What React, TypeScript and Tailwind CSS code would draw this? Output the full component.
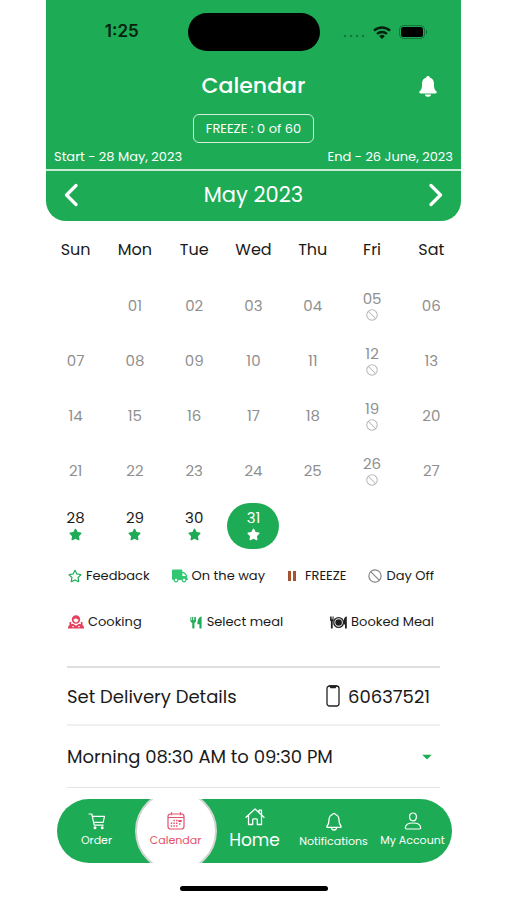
import type { ReactNode } from "react";
import { FaStar, FaTruck, FaRegStar } from "react-icons/fa";

const weekdays = ["Sun", "Mon", "Tue", "Wed", "Thu", "Fri", "Sat"];
const weeks = [
  ["", "01", "02", "03", "04", "05", "06"],
  ["07", "08", "09", "10", "11", "12", "13"],
  ["14", "15", "16", "17", "18", "19", "20"],
  ["21", "22", "23", "24", "25", "26", "27"],
  ["28", "29", "30", "31", "", "", ""],
];

function DayOffIcon({ className }: { className: string }) {
  return (
    <svg viewBox="0 0 16 16" fill="none" stroke="currentColor" strokeWidth="1.4" className={className} aria-hidden="true">
      <circle cx="8" cy="8" r="7" />
      <path d="M3 3l10 10" />
    </svg>
  );
}

function ChevronIcon({ direction }: { direction: "left" | "right" }) {
  return (
    <svg viewBox="0 0 14 24" className="h-6 w-[14px]" fill="none" stroke="currentColor" strokeWidth="3.2" strokeLinecap="round" strokeLinejoin="round" aria-hidden="true">
      <path d={direction === "left" ? "M12 2.500L2.500 12l9.500 9.500" : "M2 2.500l9.500 9.500L2 21.500"} />
    </svg>
  );
}

function SolidBellIcon() {
  return (
    <svg viewBox="0 0 18 21" className="h-[21px] w-[18px]" fill="currentColor" aria-hidden="true">
      <path d="M9 0c1 0 1.700.7 1.800 1.600C13.700 2.400 15 4.800 15 8c0 4.300.5 5.600 2.300 7.300.9.900.5 2.200-.8 2.200h-15c-1.300 0-1.700-1.300-.8-2.200C2.500 13.600 3 12.300 3 8c0-3.200 1.300-5.600 4.200-6.400C7.300.7 8 0 9 0zM5.800 18.500h6.400C11.800 20 10.500 20.800 9 20.800S6.200 20 5.800 18.500z" />
    </svg>
  );
}

function CookIcon() {
  return (
    <svg viewBox="0 0 16 14" className="h-[14px] w-4 text-[#e5405e]" fill="currentColor" aria-hidden="true">
      <path fillRule="evenodd" d="M8 .3a4.200 4.200 0 0 1 4.200 4.200c0 2.400-1.900 4.300-4.200 4.300S3.800 6.900 3.800 4.500A4.200 4.200 0 0 1 8 .3zM5.500 4.500C5.600 6.200 6.700 7.400 8 7.400s2.400-1.200 2.500-2.900C9.200 4.400 8.200 3.900 7.500 3.200c-.4.700-1.100 1.100-2 1.300z" />
      <path fillRule="evenodd" d="M1.500 7h1.700v2.300L5 8.800l3 2 3-2 1.800.5V7h1.700v3l1.500 2v1.500H0V12l1.500-2zM4.300 11v1.300h1.500V11zm5.900 0v1.300h1.500V11z" />
    </svg>
  );
}

function ForkKnifeIcon() {
  return (
    <svg viewBox="0 0 14 14" className="h-[13px] w-[14px] text-[#1dab55]" fill="currentColor" aria-hidden="true">
      <path d="M1 1h1v3.500h.8V1h1v3.500h.8V1h1v3.500h.4V1H7v4c0 1.300-.7 2-1.700 2.300v5.500c0 .9-2.300.9-2.300 0V7.300C1.700 7 1 6.300 1 5zM13 .5v12.300c0 .9-2.300.9-2.300 0V9H8.500c0-4.500 1.500-8.500 4.500-8.500z" />
    </svg>
  );
}

function BookedIcon() {
  return (
    <svg viewBox="0 0 17 13" className="h-[13px] w-[17px] text-[#202020]" fill="currentColor" aria-hidden="true">
      <path d="M0 .5h.9v2.800h.5V.5h.8v2.800h.5V.5h.9v3.800L2.700 5.500v7H.9v-7L0 4.300zM16.800.5v12H15V8.500h-1.200V4.500c0-2.200 1.200-4 3-4z" />
      <path fillRule="evenodd" d="M8.600 1a5.500 5.500 0 1 1 0 11 5.500 5.500 0 0 1 0-11zm0 1.300a4.200 4.200 0 1 0 0 8.400 4.200 4.200 0 0 0 0-8.400z" />
      <circle cx="8.600" cy="6.500" r="3.300" />
    </svg>
  );
}

function FreezeIcon() {
  return (
    <svg viewBox="0 0 14 12" className="h-3 w-[14px]" fill="#a8532f" aria-hidden="true">
      <path d="M1 1h3v10H1zM6 1h3v10H6z" />
    </svg>
  );
}

function CartIcon() {
  return (
    <svg viewBox="0 0 18 18" className="size-[18px]" fill="none" stroke="currentColor" strokeWidth="1.200" strokeLinecap="round" strokeLinejoin="round" aria-hidden="true">
      <path d="M1 2h2.800l2.400 11.200h9M4.300 4.300h12.200l-1.300 6H5.600" />
      <circle cx="7" cy="15.700" r=".9" fill="currentColor" />
      <circle cx="14.200" cy="15.700" r=".9" fill="currentColor" />
    </svg>
  );
}

function CalendarIcon() {
  return (
    <svg viewBox="0 0 18 18" className="size-[18px]" fill="none" stroke="currentColor" strokeWidth="1.200" aria-hidden="true">
      <rect x="1" y="2" width="16" height="15" rx="2.500" />
      <path d="M1 5.500h16M4.500 .3v3M13.500 .3v3" />
      <path strokeWidth="1.400" strokeDasharray="1.400 1.200" d="M6.400 8.500h4M3.800 11.300h6.600M3.800 14h6.600" />
      <path strokeWidth="2.200" d="M11.300 9h3.400" />
      <path strokeWidth="1.400" d="M12 12h1.400" />
    </svg>
  );
}

function HouseIcon() {
  return (
    <svg viewBox="0 0 20 18" className="h-[18px] w-5" fill="none" stroke="currentColor" strokeWidth="1.300" strokeLinecap="round" strokeLinejoin="round" aria-hidden="true">
      <path d="M1 9.300L10 1l9 8.300M14 4.500V2.200h2.500v4.600M3.500 7.300v9.200h4.200v-4.700c0-.6.4-1 1-1h2.600c.6 0 1 .4 1 1v4.700h4.200V7.300" />
    </svg>
  );
}

function BellIcon() {
  return (
    <svg viewBox="0 0 18 19" className="h-[19px] w-[18px]" fill="none" stroke="currentColor" strokeWidth="1.300" strokeLinejoin="round" aria-hidden="true">
      <path d="M9 1.300c.8 0 1.300.5 1.400 1.200C13 3.300 14 5.300 14 8c0 3.500.5 4.500 1.900 6 .5.6.2 1.400-.7 1.400H2.800c-.9 0-1.200-.8-.7-1.400C3.500 12.500 4 11.500 4 8c0-2.700 1-4.700 3.600-5.500.1-.7.600-1.200 1.400-1.200zM6.500 15.500c0 1.500 1.100 2.500 2.500 2.500s2.500-1 2.500-2.500" />
    </svg>
  );
}

function PersonIcon() {
  return (
    <svg viewBox="0 0 18 18" className="size-[18px]" fill="none" stroke="currentColor" strokeWidth="1.200" aria-hidden="true">
      <path d="M9 1c2 0 3.500 1.500 3.400 3.600C12.300 7 10.800 8.900 9 8.900S5.700 7 5.600 4.600C5.500 2.500 7 1 9 1z" />
      <path d="M1.300 15.800C1.500 12.800 4.500 11 9 11s7.500 1.800 7.700 4.800c0 .8-.4 1.200-1.200 1.200h-13c-.8 0-1.200-.4-1.200-1.200z" />
    </svg>
  );
}

function PhoneIcon() {
  return (
    <svg viewBox="0 0 14 22" className="h-[22px] w-[14px]" fill="none" stroke="#222" strokeWidth="1.300" aria-hidden="true">
      <rect x="1" y="1" width="12" height="20" rx="2.500" />
      <path d="M4 1h6l-.8 1.500H4.800z" fill="#222" />
    </svg>
  );
}

function StatusBar() {
  return (
    <div className="grid grid-cols-[1fr_132px_1fr] items-center pt-[13px] text-[#06210f]">
      <span className="pl-[10px] text-center font-['Inter',sans-serif] text-[17px] font-semibold">1:25</span>
      <div className="h-[38px] rounded-full bg-black" />
      <div className="flex items-center justify-end gap-2 pr-[34px]">
        <svg viewBox="0 0 22 4" className="mt-2 h-1 w-[22px] opacity-35" fill="currentColor" aria-hidden="true">
          <circle cx="2" cy="2" r="1.300" /><circle cx="8" cy="2" r="1.300" /><circle cx="14" cy="2" r="1.300" /><circle cx="20" cy="2" r="1.300" />
        </svg>
        <svg viewBox="0 0 18 13" className="h-[13px] w-[18px]" fill="none" stroke="currentColor" strokeWidth="2.400" aria-hidden="true">
          <path d="M1 4.700a11.500 11.500 0 0 1 16 0M4 8a7.200 7.200 0 0 1 10 0" />
          <path d="M6.200 10.200a4 4 0 0 1 5.600 0L9 13z" fill="currentColor" stroke="none" />
        </svg>
        <svg viewBox="0 0 28 14" className="h-[14px] w-7" aria-hidden="true">
          <rect x=".5" y=".5" width="25" height="13" rx="4" fill="none" stroke="currentColor" opacity=".4" />
          <rect x="2" y="2" width="22" height="10" rx="2.500" fill="#000" />
          <path d="M27 5c1.300.6 1.300 3.400 0 4z" fill="currentColor" opacity=".5" />
        </svg>
      </div>
    </div>
  );
}

function Header() {
  return (
    <header className="rounded-b-[20px] bg-[#1dab55] text-white">
      <StatusBar />
      <div className="grid grid-cols-[1fr_auto_1fr] items-center px-6 pt-5">
        <h1 className="col-start-2 text-[22px] leading-[30px] font-medium">Calendar</h1>
        <button type="button" aria-label="Notifications" className="justify-self-end">
          <SolidBellIcon />
        </button>
      </div>
      <div className="flex justify-center pt-[13px]">
        <button type="button" className="h-[29px] rounded-md border border-white/80 px-3 text-[13px]">FREEZE : 0 of 60</button>
      </div>
      <div className="flex justify-between px-2 pt-1 pb-[2px] text-[13px] leading-5">
        <span>Start - 28 May, 2023</span>
        <span>End - 26 June, 2023</span>
      </div>
      <div className="flex h-[52px] items-center justify-between border-t-2 border-white/75 px-[18px] pb-[3px]">
        <button type="button" aria-label="Previous month"><ChevronIcon direction="left" /></button>
        <h2 className="text-[21px]">May 2023</h2>
        <button type="button" aria-label="Next month"><ChevronIcon direction="right" /></button>
      </div>
    </header>
  );
}

function DayCell({ day, current, dayOff }: { day: string; current: boolean; dayOff: boolean }) {
  const selected = day === "31";
  return (
    <button
      type="button"
      className={
        "mx-auto flex h-[46px] w-[52px] flex-col items-center justify-center gap-[2px] rounded-full text-[15px] leading-4 " +
        (selected ? "bg-[#1dab55] text-white" : current ? "text-[#1a1a1a]" : "text-[#8f8f8f]")
      }
    >
      {day}
      {dayOff && <DayOffIcon className="size-3 text-[#b8b8b8]" />}
      {current && <FaStar className={selected ? "size-[13px] text-white" : "size-[13px] text-[#1dab55]"} />}
    </button>
  );
}

function Legend({ icon, children }: { icon: ReactNode; children: ReactNode }) {
  return <li className="flex items-center gap-1">{icon}<span>{children}</span></li>;
}

function NavItem({ icon, label, active = false, large = false }: { icon: ReactNode; label: string; active?: boolean; large?: boolean }) {
  return (
    <a
      href="#"
      aria-current={active ? "page" : undefined}
      className={"relative flex flex-col items-center justify-center whitespace-nowrap " + (active ? "text-[#e5506b]" : "text-white")}
    >
      {active && <span className="absolute top-1/2 left-1/2 size-[82px] -translate-1/2 rounded-full border-2 border-[#cfd6d1] bg-white" />}
      <span className="relative">{icon}</span>
      <span className={large ? "relative text-[17px] leading-7" : "relative text-[11px] leading-5"}>{label}</span>
    </a>
  );
}

export default function App() {
  return (
    <div className="min-h-screen bg-white font-['Poppins','Inter',sans-serif] text-[#1a1a1a]">
      <div className="mx-auto w-full max-w-[415px]">
        <Header />
        <main>
          <table className="w-full table-fixed text-center">
            <thead>
              <tr className="h-[57px] text-base">
                {weekdays.map((name) => <th key={name} scope="col" className="p-0 font-normal">{name}</th>)}
              </tr>
            </thead>
            <tbody>
              {weeks.map((days, week) => (
                <tr key={week} className="h-[55px]">
                  {days.map((day, column) => (
                    <td key={column} className="p-0">
                      {day && <DayCell day={day} current={week === 4} dayOff={column === 5} />}
                    </td>
                  ))}
                </tr>
              ))}
            </tbody>
          </table>
          <ul className="flex h-[46px] items-center justify-between pr-[27px] pl-[22px] text-[13px]">
            <Legend icon={<FaRegStar className="size-[14px] text-[#1dab55]" />}>Feedback</Legend>
            <Legend icon={<FaTruck className="size-4 text-[#32c873]" />}>On the way</Legend>
            <Legend icon={<FreezeIcon />}>FREEZE</Legend>
            <Legend icon={<DayOffIcon className="size-[14px] text-[#888]" />}>Day Off</Legend>
          </ul>
          <ul className="flex h-[46px] items-center justify-between pr-[27px] pl-[22px] text-[13px]">
            <Legend icon={<CookIcon />}>Cooking</Legend>
            <Legend icon={<ForkKnifeIcon />}>Select meal</Legend>
            <Legend icon={<BookedIcon />}>Booked Meal</Legend>
          </ul>
          <section className="mx-[21px] mt-[21px] border-t-2 border-[#dedede] text-[18px]">
            <div className="flex h-[58px] items-center justify-between border-b-2 border-[#f0f0f0] pr-[10px]">
              <h3>Set Delivery Details</h3>
              <a href="tel:60637521" className="flex items-center gap-2"><PhoneIcon />60637521</a>
            </div>
            <div className="relative border-b border-[#e4e4e4]">
              <select aria-label="Delivery time" className="h-[61px] w-full appearance-none bg-transparent pr-8">
                <option>Morning 08:30 AM to 09:30 PM</option>
              </select>
              <svg viewBox="0 0 10 5" className="pointer-events-none absolute top-1/2 right-2 h-[5px] w-[10px] -translate-y-1/2" fill="#1dab55" aria-hidden="true"><path d="M0 0h10L5 5z" /></svg>
            </div>
          </section>
        </main>
        <nav className="mt-[11px] mr-[9px] ml-[11px] grid h-16 grid-cols-5 overflow-hidden rounded-full bg-[#1dab55]">
          <NavItem icon={<CartIcon />} label="Order" />
          <NavItem icon={<CalendarIcon />} label="Calendar" active />
          <NavItem icon={<HouseIcon />} label="Home" large />
          <NavItem icon={<BellIcon />} label="Notifications" />
          <NavItem icon={<PersonIcon />} label="My Account" />
        </nav>
        <div className="mx-auto mt-[23px] h-[5px] w-[148px] rounded-full bg-black" />
      </div>
    </div>
  );
}
